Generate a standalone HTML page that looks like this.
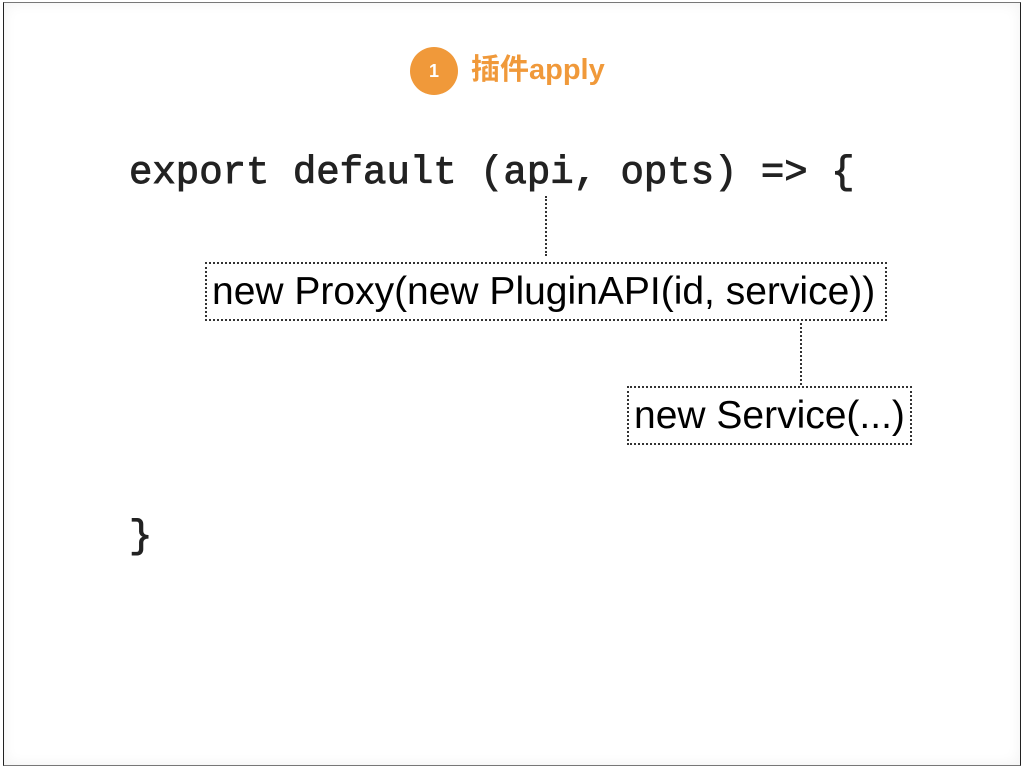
<!DOCTYPE html>
<html><head><meta charset="utf-8"><style>
html,body{margin:0;padding:0;width:1024px;height:768px;background:#fff;overflow:hidden;position:relative}
.frame{position:absolute;left:3px;top:2px;width:1016px;height:762px;border:1px solid #555;border-top-color:#777;border-left-color:#222;border-right-color:#222;border-bottom-color:#777;box-shadow:inset 0 0 14px rgba(0,0,0,0.06);}
.badge{position:absolute;left:410px;top:47px;width:48px;height:48px;border-radius:50%;background:#f0993a;color:#fff;font:bold 18px "Liberation Sans",sans-serif;text-align:center;line-height:48px}
.title{position:absolute;left:471px;top:51px;font:bold 29px "Liberation Sans","Noto Sans CJK SC",sans-serif;color:#f0993a;line-height:38px}
.code{position:absolute;left:129px;font:39px "Liberation Mono",monospace;color:#222;white-space:pre;line-height:46px;-webkit-text-stroke:0.9px #222}
.box{position:absolute;border:2px dotted #333;box-sizing:border-box;font:39px "Liberation Sans",sans-serif;color:#000;white-space:nowrap;line-height:56px;padding-left:5px}
.vl{position:absolute;border-left:2px dotted #333;width:0}
</style></head><body>
<div class="frame"></div>
<div class="badge">1</div>
<div class="title">插件apply</div>
<div class="code" style="top:150px">export default (api, opts) =&gt; {</div>
<div class="vl" style="left:545px;top:196px;height:60px"></div>
<div class="box" style="left:205px;top:262px;width:682px;height:59px">new Proxy(new PluginAPI(id, service))</div>
<div class="vl" style="left:800px;top:323px;height:62px"></div>
<div class="box" style="left:627px;top:386px;width:285px;height:59px">new Service(...)</div>
<div class="code" style="top:514px">}</div>
</body></html>
